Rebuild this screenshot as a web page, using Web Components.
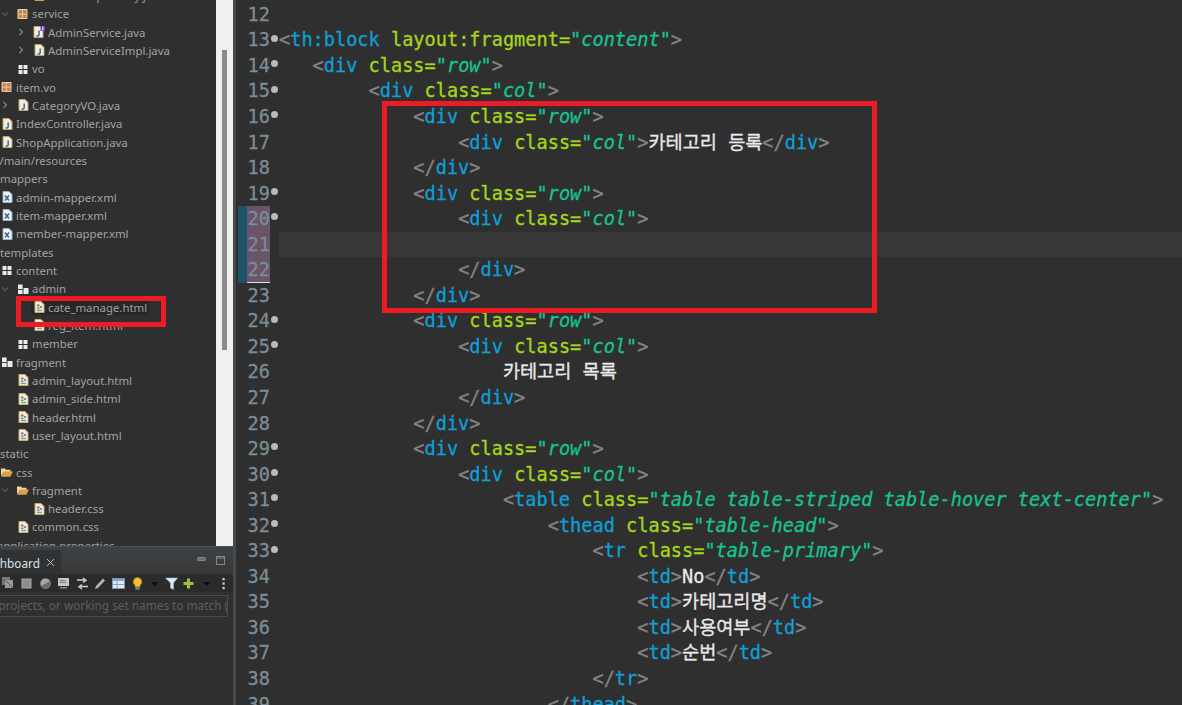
<!DOCTYPE html>
<html>
<head>
<meta charset="utf-8">
<title>Eclipse</title>
<style>
  html, body { margin: 0; height: 100%; background: #2f2f2f; overflow: hidden; }
</style>
</head>
<body>
<ide-window>
  <side-pane slot="side">
    <tree-row depth="3" icon="java" label="AdminRepository.java"></tree-row>
    <tree-row depth="2" icon="pkg" arrow="down" label="service"></tree-row>
    <tree-row depth="3" icon="iface" arrow="right" label="AdminService.java"></tree-row>
    <tree-row depth="3" icon="java" arrow="right" label="AdminServiceImpl.java"></tree-row>
    <tree-row depth="2" icon="pkgw" label="vo"></tree-row>
    <tree-row depth="1" icon="pkg" label="item.vo"></tree-row>
    <tree-row depth="2" icon="java" arrow="right" label="CategoryVO.java"></tree-row>
    <tree-row depth="1" icon="java" label="IndexController.java"></tree-row>
    <tree-row depth="1" icon="java" label="ShopApplication.java"></tree-row>
    <tree-row depth="0" shift="-16" label="src/main/resources"></tree-row>
    <tree-row depth="0" label="mappers"></tree-row>
    <tree-row depth="1" icon="xml" label="admin-mapper.xml"></tree-row>
    <tree-row depth="1" icon="xml" label="item-mapper.xml"></tree-row>
    <tree-row depth="1" icon="xml" label="member-mapper.xml"></tree-row>
    <tree-row depth="0" label="templates"></tree-row>
    <tree-row depth="1" icon="pkgw" label="content"></tree-row>
    <tree-row depth="2" icon="pkgl" arrow="down" label="admin"></tree-row>
    <tree-row depth="3" icon="html" selected label="cate_manage.html"></tree-row>
    <tree-row depth="3" icon="html" label="reg_item.html"></tree-row>
    <tree-row depth="2" icon="pkgw" label="member"></tree-row>
    <tree-row depth="1" icon="pkgl" label="fragment"></tree-row>
    <tree-row depth="2" icon="html" label="admin_layout.html"></tree-row>
    <tree-row depth="2" icon="html" label="admin_side.html"></tree-row>
    <tree-row depth="2" icon="html" label="header.html"></tree-row>
    <tree-row depth="2" icon="html" label="user_layout.html"></tree-row>
    <tree-row depth="0" label="static"></tree-row>
    <tree-row depth="1" icon="folder" label="css"></tree-row>
    <tree-row depth="2" icon="folder" arrow="down" label="fragment"></tree-row>
    <tree-row depth="3" icon="html" label="header.css"></tree-row>
    <tree-row depth="2" icon="html" label="common.css"></tree-row>
    <tree-row depth="0" shift="-3" label="application.properties"></tree-row>
  </side-pane>
  <code-editor slot="main">
    <code-line n="12"></code-line>
    <code-line n="13" fold code='<th:block layout:fragment="content">'></code-line>
    <code-line n="14" fold indent="3" code='<div class="row">'></code-line>
    <code-line n="15" fold indent="8" code='<div class="col">'></code-line>
    <code-line n="16" fold indent="12" code='<div class="row">'></code-line>
    <code-line n="17" indent="16" code='<div class="col">카테고리 등록</div>'></code-line>
    <code-line n="18" indent="12" code='</div>'></code-line>
    <code-line n="19" fold indent="12" code='<div class="row">'></code-line>
    <code-line n="20" fold changed indent="16" code='<div class="col">'></code-line>
    <code-line n="21" changed current></code-line>
    <code-line n="22" changed last indent="16" code='</div>'></code-line>
    <code-line n="23" indent="12" code='</div>'></code-line>
    <code-line n="24" fold indent="12" code='<div class="row">'></code-line>
    <code-line n="25" fold indent="16" code='<div class="col">'></code-line>
    <code-line n="26" indent="20" code='카테고리 목록'></code-line>
    <code-line n="27" indent="16" code='</div>'></code-line>
    <code-line n="28" indent="12" code='</div>'></code-line>
    <code-line n="29" fold indent="12" code='<div class="row">'></code-line>
    <code-line n="30" fold indent="16" code='<div class="col">'></code-line>
    <code-line n="31" fold indent="20" code='<table class="table table-striped table-hover text-center">'></code-line>
    <code-line n="32" fold indent="24" code='<thead class="table-head">'></code-line>
    <code-line n="33" fold indent="28" code='<tr class="table-primary">'></code-line>
    <code-line n="34" indent="32" code='<td>No</td>'></code-line>
    <code-line n="35" indent="32" code='<td>카테고리명</td>'></code-line>
    <code-line n="36" indent="32" code='<td>사용여부</td>'></code-line>
    <code-line n="37" indent="32" code='<td>순번</td>'></code-line>
    <code-line n="38" indent="28" code='</tr>'></code-line>
    <code-line n="39" indent="24" code='</thead>'></code-line>
  </code-editor>
  <red-box slot="over" style="left:16px;top:296px;width:150px;height:31px"></red-box>
  <red-box slot="over" style="left:382px;top:101px;width:495px;height:212px"></red-box>
</ide-window>

<script>
const ICONS = {
  java: '<path d="M2 .5h6l3 3v8H2z" fill="#f3eedc" stroke="#c4a262"/><path d="M7.2 4.5v4.2q0 1.500-2.600 1.300" fill="none" stroke="#2d6cc0" stroke-width="1.500"/>',
  iface: '<path d="M1 .5h6l3 3v8H1z" fill="#f3eedc" stroke="#c4a262"/><path d="M6 4.500v4.200q0 1.500-2.600 1.300" fill="none" stroke="#2d6cc0" stroke-width="1.500"/><rect x="7.500" y="0" width="4.500" height="5" fill="#6a4fd0"/><path d="M9.700 .8v3.400" stroke="#eee" stroke-width="1"/>',
  xml: '<path d="M2 .5h6l3 3v8H2z" fill="#eef1f6" stroke="#9db0c6"/><path d="M4 4.500l4 5M8 4.500l-4 5" stroke="#2f5f9c" stroke-width="1.400"/>',
  html: '<path d="M2 .5h6l3 3v8H2z" fill="#f1ecdc" stroke="#c9ac70"/><rect x="4" y="3.500" width="2.500" height="2" fill="#c2605a"/><rect x="7" y="5" width="2" height="2" fill="#6a8fc8"/><rect x="4" y="6.500" width="2.500" height="1.500" fill="#5a9ea0"/><rect x="4" y="8.700" width="5" height="1.500" fill="#72a88c"/>',
  pkg: '<rect x=".5" y="1" width="10" height="10" rx="1" fill="#eed6b8"/><rect x="1.500" y="2" width="3.700" height="3.700" fill="#c8854e"/><rect x="6" y="2" width="3.700" height="3.700" fill="#c8854e"/><rect x="1.500" y="6.500" width="3.700" height="3.700" fill="#c8854e"/><rect x="6" y="6.500" width="3.700" height="3.700" fill="#c8854e"/>',
  pkgw: '<rect x="1.500" y="2" width="4" height="4" fill="#e9ecef"/><rect x="6.500" y="2" width="4" height="4" fill="#e9ecef"/><rect x="1.500" y="7" width="4" height="4" fill="#e9ecef"/><rect x="6.500" y="7" width="4" height="4" fill="#e9ecef"/>',
  pkgl: '<rect x="1" y="1.500" width="4.600" height="4.600" fill="#e9ecef"/><rect x="1" y="7" width="4.600" height="4" fill="#e9ecef"/><rect x="6.500" y="5" width="5" height="6" rx=".5" fill="#e9ecef"/>',
  folder: '<path d="M0 2.500h4l1 1.200h4.500V6H3L0 10z" fill="#f3d595"/><path d="M3 5.600h9l-2.600 5.200H0z" fill="#dca04e"/>'
};

class IdeWindow extends HTMLElement {
  constructor() {
    super();
    this.attachShadow({ mode: 'open' });
    this.shadowRoot.innerHTML = `
      <style>
        :host { display: flex; position: relative; width: 1182px; height: 705px; overflow: hidden; background: #2f2f2f; }
        .sash { width: 3px; flex: none; background: #474a4c; }
        ::slotted([slot=side]) { width: 233px; flex: none; }
        ::slotted([slot=main]) { flex: 1; min-width: 0; }
      </style>
      <slot name="side"></slot>
      <div class="sash"></div>
      <slot name="main"></slot>
      <slot name="over"></slot>`;
  }
}

class RedBox extends HTMLElement {
  constructor() {
    super();
    this.attachShadow({ mode: 'open' });
    this.shadowRoot.innerHTML = `
      <style>
        :host { display: block; position: absolute; box-sizing: border-box; border: 5px solid #ed1c24; }
      </style>`;
  }
}

class IdeIcon extends HTMLElement {
  connectedCallback() {
    if (this.shadowRoot) return;
    this.attachShadow({ mode: 'open' });
    this.shadowRoot.innerHTML = `
      <style>
        :host { display: block; width: 12px; height: 12px; }
        svg { display: block; }
      </style>
      <svg width="12" height="12" viewBox="0 0 12 12">${ICONS[this.getAttribute('name')] || ''}</svg>`;
  }
}

class TreeRow extends HTMLElement {
  connectedCallback() {
    if (this.shadowRoot) return;
    this.attachShadow({ mode: 'open' });
    const depth = parseInt(this.getAttribute('depth') || '0', 10);
    const shift = parseInt(this.getAttribute('shift') || '0', 10);
    const arrow = this.getAttribute('arrow');
    const icon = this.getAttribute('icon');
    const chevron = arrow === 'down'
      ? '<svg width="10" height="10" viewBox="0 0 10 10"><path d="M2 3.500l3 3 3-3" fill="none" stroke="#5c5c5c" stroke-width="1.100"/></svg>'
      : arrow === 'right'
        ? '<svg width="10" height="10" viewBox="0 0 10 10"><path d="M3.500 2l3 3-3 3" fill="none" stroke="#8a8a8a" stroke-width="1.100"/></svg>'
        : '';
    this.shadowRoot.innerHTML = `
      <style>
        :host { display: flex; align-items: center; height: 18.33px; margin-left: ${depth * 16 - 32 + shift}px;
          font: 11.4px "Noto Sans", sans-serif; color: #a2a2a2; white-space: nowrap; }
        .arrow { width: 17px; flex: none; display: flex; }
        .icon { width: 15px; flex: none; }
        .sel { background: #272727; margin-left: -2px; padding: 0 2px; }
        .item { display: flex; align-items: center; }
      </style>
      <span class="arrow">${chevron}</span>
      <span class="item ${this.hasAttribute('selected') ? 'sel' : ''}">
        <span class="icon">${icon ? `<ide-icon name="${icon}"></ide-icon>` : ''}</span>
        <span>${this.getAttribute('label')}</span>
      </span>`;
  }
}

const TOOL_ICONS = [
  [17, '<rect x="0" y="0" width="8" height="8" fill="#777"/><rect x="3" y="3" width="8" height="8" fill="#9a9a9a"/><path d="M2 2l9 9" stroke="#555"/>'],
  [19, '<rect x="2" y="2" width="9" height="9" fill="#8d8d8d" stroke="#a8a8a8"/>'],
  [18.5, '<circle cx="6.500" cy="6.500" r="5.200" fill="#a5a5a5"/><path d="M2 9a5 5 0 0 0 9-5z" fill="#6d6d6d"/>'],
  [18.5, '<rect x="1" y="1" width="11" height="8" fill="#c3c8cc"/><rect x="2.500" y="3" width="6" height="1" fill="#777"/><rect x="2.500" y="5" width="7" height="1" fill="#777"/><rect x="3" y="10" width="7" height="1.500" fill="#888"/>'],
  [18.5, '<path d="M1 3h8M7 1l3 2.200L7 5.500M12 9.500H4M6 7.500L3 9.700 6 12" fill="none" stroke="#cfcfcf" stroke-width="1.500"/>'],
  [18, '<path d="M1 12l1-3 7-7.500 2 2-7 7.500z" fill="#b4b4b4"/>'],
  [18, '<rect x=".5" y="1.500" width="12" height="10" fill="#e4e9f0" stroke="#7a93b8"/><rect x="1" y="2" width="11" height="2" fill="#8aa4c8"/><path d="M5 4v7M1 7.500h11" stroke="#8aa4c8"/>'],
  [19, '<path d="M6.500 .5a4.300 4.300 0 0 1 2.500 7.800V10H4V8.300A4.300 4.300 0 0 1 6.500 .5z" fill="#f6c21c" stroke="#8a7a50"/><rect x="4.300" y="10.500" width="4.400" height="2" fill="#8b8b8b"/>'],
  [16.5, '<path d="M3 5h7.500L6.700 9z" fill="#0d0d0d"/>'],
  [16, '<path d="M.5 1h12L8.500 6v6.500l-3-1.500V6z" fill="#dcebf5" stroke="#8fb8d4" stroke-width=".6"/>'],
  [19.5, '<path d="M5 1.500h3V5h3.500v3H8v3.500H5V8H1.500V5H5z" fill="#9dc23c"/>'],
  [16.5, '<path d="M3 5h7.500L6.700 9z" fill="#0d0d0d"/>'],
  [16.5, '<rect x="5.500" y="1" width="2.200" height="2.200" fill="#d2d2d2"/><rect x="5.500" y="5.500" width="2.200" height="2.200" fill="#d2d2d2"/><rect x="5.500" y="10" width="2.200" height="2.200" fill="#d2d2d2"/>']
];

class SidePane extends HTMLElement {
  constructor() {
    super();
    this.attachShadow({ mode: 'open' });
    const tools = TOOL_ICONS.map(([w, body]) =>
      `<span style="width:${w}px;flex:none;display:flex;justify-content:center"><svg width="13" height="13" viewBox="0 0 13 13">${body}</svg></span>`).join('');
    this.shadowRoot.innerHTML = `
      <style>
        :host { display: flex; flex-direction: column; height: 705px; background: #2f2f2f; overflow: hidden; }
        .top { flex: none; height: 546px; display: flex; overflow: hidden; }
        .tree { flex: 1; min-width: 0; overflow: hidden; margin-top: -13.700px; }
        .scroll { width: 17px; flex: none; background: #f0f0f0; display: flex; justify-content: center; padding-top: 50px; box-sizing: border-box; }
        .thumb { width: 5px; height: 300px; background: #8b8b8b; margin-left: -1px; }
        .tabs { flex: none; height: 28px; box-sizing: border-box; border-top: 1px solid #4b4e50; display: flex; align-items: flex-end;
          background: linear-gradient(#3f4244, #363739); }
        .tab { width: 61px; height: 24px; box-sizing: border-box; background: #303234; display: flex; justify-content: flex-end; align-items: center;
          overflow: hidden; font: 11.8px "Noto Sans", sans-serif; color: #dbe2e8; padding: 1px 6px 0 0; gap: 6px; white-space: nowrap; }
        .ctrl { margin-left: auto; display: flex; gap: 10px; padding: 0 8px 9px 0; }
        .bar { flex: none; height: 18px; background: #2b2b2b; display: flex; align-items: center; }
        .field { flex: none; height: 22px; box-sizing: border-box; margin: 3px 5px 0 -6px; border: 1px solid #4b4b4b; overflow: hidden;
          font: 11.8px "Noto Sans", sans-serif; color: #5f5f5f; white-space: nowrap; line-height: 18px; }
        .field span { margin-left: -56px; }
      </style>
      <div class="top">
        <div class="tree"><slot></slot></div>
        <div class="scroll"><div class="thumb"></div></div>
      </div>
      <div class="tabs">
        <div class="tab"><span>Dashboard</span><svg width="9" height="9" viewBox="0 0 9 9" style="flex:none"><path d="M1 1l7 7M8 1L1 8" stroke="#b9bec2" stroke-width="1"/></svg></div>
        <div class="ctrl">
          <svg width="9" height="9" viewBox="0 0 9 9"><rect x=".5" y="1.500" width="8" height="3" rx="1" fill="#6a6d70" stroke="#85888b"/></svg>
          <svg width="9" height="9" viewBox="0 0 9 9"><rect x=".5" y=".5" width="8" height="8" fill="none" stroke="#85888b"/><path d="M.5 2h8" stroke="#85888b"/></svg>
        </div>
      </div>
      <div class="bar">${tools}</div>
      <div class="field"><span>Type tags, projects, or working set names to match (i</span></div>`;
  }
}

class CodeEditor extends HTMLElement {
  constructor() {
    super();
    this.attachShadow({ mode: 'open' });
    this.shadowRoot.innerHTML = `
      <style>
        :host { display: block; height: 705px; overflow: hidden; background: #2f2f2f; box-sizing: border-box; padding-top: 1.800px; }
      </style>
      <slot></slot>`;
  }
}

class CodeLine extends HTMLElement {
  connectedCallback() {
    if (this.shadowRoot) return;
    this.attachShadow({ mode: 'open' });
    const changed = this.hasAttribute('changed');
    const code = this.getAttribute('code') || '';
    const indent = ' '.repeat(parseInt(this.getAttribute('indent') || '0', 10));
    this.shadowRoot.innerHTML = `
      <style>
        :host { display: flex; height: 25.56px; white-space: pre;
          font: 18.6px/25.56px "DejaVu Sans Mono", "Noto Sans CJK KR", monospace; -webkit-text-stroke: .3px; }
        .band { width: 9px; margin-left: 2px; flex: none; background: ${changed ? '#1d5368' : 'transparent'}; }
        .num { width: 23px; flex: none; text-align: right; color: #7b8c97; overflow: hidden;
          background: ${changed ? '#6a5468' : 'transparent'};
          ${this.hasAttribute('last') ? 'box-shadow: inset 0 -1px 0 #e0e0e0;' : ''} }
        .fold { width: 9px; flex: none; display: flex; align-items: center; justify-content: center; }
        .fold i { width: 7px; height: 7px; border-radius: 50%; background: #b2bcc2; position: relative; top: -2px; }
        .code { flex: 1; min-width: 0; overflow: hidden; color: #e9e9e9; background: ${this.hasAttribute('current') ? '#383838' : 'transparent'}; }
        .p { color: #848484; } .t { color: #0e9fd8; } .a { color: #a5d61c; } .s { color: #18c292; font-style: italic; }
      </style>
      <span class="band"></span>
      <span class="num">${this.getAttribute('n')}</span>
      <span class="fold">${this.hasAttribute('fold') ? '<i></i>' : ''}</span>
      <span class="code"></span>`;
    const box = this.shadowRoot.querySelector('.code');
    box.append(indent);
    const add = (cls, text) => {
      const s = document.createElement('span');
      s.className = cls;
      s.textContent = text;
      box.append(s);
    };
    // small html tokenizer, good enough for these lines
    for (const m of code.matchAll(/(<\/?)([\w:]+)|([\w:-]+=)|("[^"]*")|(>)|(\s+|[^<>"\s]+)/g)) {
      if (m[1]) { add('p', m[1]); add('t', m[2]); }
      else if (m[3]) add('a', m[3]);
      else if (m[4]) add('s', m[4]);
      else if (m[5]) add('p', m[5]);
      else box.append(m[6]);
    }
  }
}

customElements.define('ide-window', IdeWindow);
customElements.define('red-box', RedBox);
customElements.define('ide-icon', IdeIcon);
customElements.define('tree-row', TreeRow);
customElements.define('side-pane', SidePane);
customElements.define('code-editor', CodeEditor);
customElements.define('code-line', CodeLine);
</script>
</body>
</html>
